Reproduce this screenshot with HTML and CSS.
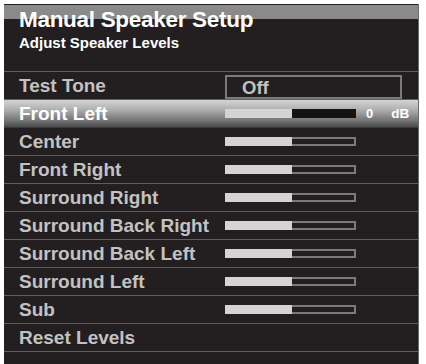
FILE: index.html
```html
<!DOCTYPE html>
<html>
<head>
<meta charset="utf-8">
<link rel="stylesheet" href="styles.css">
</head>
<body>
<div class="panel">
  <div class="header">
    <div class="title">Manual Speaker Setup</div>
    <div class="subtitle">Adjust Speaker Levels</div>
  </div>
  <div class="row">
    <div class="label">Test Tone</div>
    <div class="value"><div class="box">Off</div></div>
  </div>
  <div class="row selected">
    <div class="label">Front Left</div>
    <div class="value">
      <div class="bar active"><div class="fill"></div><div class="rest"></div></div>
      <span class="num">0</span><span class="unit">dB</span>
    </div>
  </div>
  <div class="row">
    <div class="label">Center</div>
    <div class="value"><div class="bar"><div class="fill"></div><div class="rest"></div></div></div>
  </div>
  <div class="row">
    <div class="label">Front Right</div>
    <div class="value"><div class="bar"><div class="fill"></div><div class="rest"></div></div></div>
  </div>
  <div class="row">
    <div class="label">Surround Right</div>
    <div class="value"><div class="bar"><div class="fill"></div><div class="rest"></div></div></div>
  </div>
  <div class="row">
    <div class="label">Surround Back Right</div>
    <div class="value"><div class="bar"><div class="fill"></div><div class="rest"></div></div></div>
  </div>
  <div class="row">
    <div class="label">Surround Back Left</div>
    <div class="value"><div class="bar"><div class="fill"></div><div class="rest"></div></div></div>
  </div>
  <div class="row">
    <div class="label">Surround Left</div>
    <div class="value"><div class="bar"><div class="fill"></div><div class="rest"></div></div></div>
  </div>
  <div class="row">
    <div class="label">Sub</div>
    <div class="value"><div class="bar"><div class="fill"></div><div class="rest"></div></div></div>
  </div>
  <div class="row">
    <div class="label">Reset Levels</div>
    <div class="value"></div>
  </div>
</div>
</body>
</html>
```

FILE: styles.css
```css
html, body {
  margin: 0;
  padding: 0;
  background: #ffffff;
}
body {
  font-family: "Liberation Sans", Arial, sans-serif;
  font-weight: bold;
}
.panel {
  margin: 4px 0 0 4px;
  width: 415px;
  height: 360px;
  background: #231f20;
  padding-top: 1px;
  box-sizing: border-box;
  border-right: 1px solid #6a6a6a;
  overflow: hidden;
}
.header {
  height: 67px;
  box-sizing: border-box;
  padding: 2px 0 0 15px;
  background: linear-gradient(to bottom, #8a8a8a 0, #8a8a8a 14px, transparent 14px);
  border-bottom: 1px solid #5e5e5e;
}
.title {
  font-size: 22.5px;
  line-height: 25px;
  color: #ffffff;
  letter-spacing: -0.3px;
}
.subtitle {
  margin-top: 3px;
  font-size: 15px;
  line-height: 16px;
  color: #ffffff;
}
.row {
  display: grid;
  grid-template-columns: 221px 1fr;
  align-items: center;
  height: 28px;
  box-sizing: border-box;
  border-bottom: 1px solid #5e5e5e;
}
.label {
  padding-left: 15px;
  font-size: 19px;
  line-height: 20px;
  color: #c2c2c2;
}
.value {
  display: flex;
  align-items: center;
}
.box {
  width: 177px;
  height: 24px;
  box-sizing: border-box;
  border: 2px solid #7a7a7a;
  padding-left: 15px;
  font-size: 18.5px;
  line-height: 21px;
  color: #c2c2c2;
  margin-top: 2px;
}
.selected {
  background: linear-gradient(to bottom, #d4d4d4 0%, #b0b0b0 35%, #6e6e6e 80%, #4a4a4a 100%);
  border-bottom-color: #3a3a3a;
}
.selected .label {
  color: #ffffff;
}
.bar {
  display: flex;
  width: 131px;
  height: 9px;
}
.fill {
  width: 67px;
  background: #d4d4d4;
}
.rest {
  flex: 1;
  border: 2px solid #7a7a7a;
  border-left: 0;
  background: #231f20;
}
.active .rest {
  border-color: #151314;
  background: #151314;
}
.num {
  margin-left: 10px;
  font-size: 13px;
  color: #ffffff;
}
.unit {
  margin-left: 18px;
  font-size: 13.5px;
  color: #ffffff;
}
```
